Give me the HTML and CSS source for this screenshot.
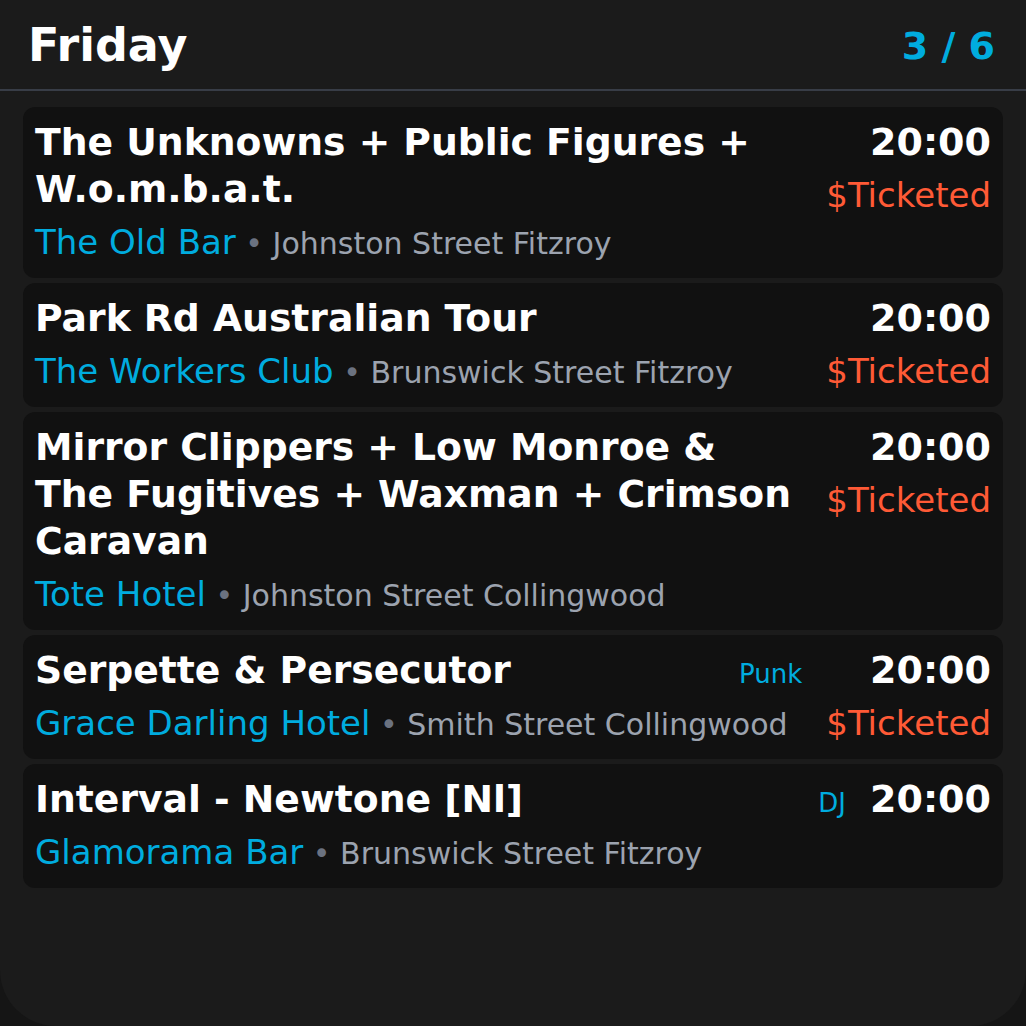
FILE: index.html
```html
<!DOCTYPE html>
<html lang="en">
<head>
<meta charset="utf-8">
<title>Friday</title>
<link rel="stylesheet" href="styles.css">
</head>
<body>
<div class="panel">
  <header class="header">
    <h1 class="day">Friday</h1>
    <div class="counter">3 / 6</div>
  </header>
  <main class="list">
    <article class="card">
      <div class="info">
        <div class="head">
          <div class="title">The Unknowns + Public Figures + W.o.m.b.a.t.</div>
        </div>
        <div class="place"><span class="venue">The Old Bar</span> <span class="dot">•</span> <span class="addr">Johnston Street Fitzroy</span></div>
      </div>
      <div class="meta">
        <div class="time">20:00</div>
        <div class="price">$Ticketed</div>
      </div>
    </article>
    <article class="card">
      <div class="info">
        <div class="head">
          <div class="title">Park Rd Australian Tour</div>
        </div>
        <div class="place"><span class="venue">The Workers Club</span> <span class="dot">•</span> <span class="addr">Brunswick Street Fitzroy</span></div>
      </div>
      <div class="meta">
        <div class="time">20:00</div>
        <div class="price">$Ticketed</div>
      </div>
    </article>
    <article class="card">
      <div class="info">
        <div class="head">
          <div class="title">Mirror Clippers + Low Monroe &amp; The Fugitives + Waxman + Crimson Caravan</div>
        </div>
        <div class="place"><span class="venue">Tote Hotel</span> <span class="dot">•</span> <span class="addr">Johnston Street Collingwood</span></div>
      </div>
      <div class="meta">
        <div class="time">20:00</div>
        <div class="price">$Ticketed</div>
      </div>
    </article>
    <article class="card">
      <div class="info">
        <div class="head">
          <div class="title">Serpette &amp; Persecutor</div>
          <div class="genre">Punk</div>
        </div>
        <div class="place"><span class="venue">Grace Darling Hotel</span> <span class="dot">•</span> <span class="addr">Smith Street Collingwood</span></div>
      </div>
      <div class="meta">
        <div class="time">20:00</div>
        <div class="price">$Ticketed</div>
      </div>
    </article>
    <article class="card">
      <div class="info">
        <div class="head">
          <div class="title">Interval - Newtone [Nl]</div>
          <div class="genre">DJ</div>
        </div>
        <div class="place"><span class="venue">Glamorama Bar</span> <span class="dot">•</span> <span class="addr">Brunswick Street Fitzroy</span></div>
      </div>
      <div class="meta">
        <div class="time">20:00</div>
      </div>
    </article>
  </main>
</div>
</body>
</html>
```

FILE: styles.css
```css
html, body {
  margin: 0;
  padding: 0;
  background: #151515;
}

body {
  font-family: "DejaVu Sans", "Liberation Sans", sans-serif;
  color: #ffffff;
}

.panel {
  height: 1026px;
  box-sizing: border-box;
  background: #1b1b1b;
  border-radius: 0 0 56px 56px;
  overflow: hidden;
}

.header {
  display: flex;
  align-items: center;
  justify-content: space-between;
  padding: 19px 31px 17px 28px;
  border-bottom: 2px solid #383d47;
}

.day {
  margin: 0;
  font-size: 46px;
  line-height: 1.16;
  font-weight: bold;
}

.counter {
  font-size: 38px;
  font-weight: bold;
  color: #00acdf;
}

.list {
  display: flex;
  flex-direction: column;
  gap: 5px;
  padding: 16px 23px 0 23px;
}

.card {
  display: flex;
  align-items: flex-start;
  gap: 24px;
  background: #111111;
  border-radius: 12px;
  padding: 12px 12px 10px 12px;
}

.info {
  flex: 1;
  min-width: 0;
}

.head {
  display: flex;
  align-items: baseline;
  gap: 24px;
}

.title {
  flex: 1;
  min-width: 0;
  font-size: 37.7px;
  line-height: 47px;
  font-weight: bold;
}

.genre {
  font-size: 26px;
  color: #00acdf;
}

.place {
  margin-top: 4px;
  font-size: 30px;
  line-height: 1.5;
  color: #9ca3af;
}

.venue {
  font-size: 34px;
  color: #00acdf;
}

.dot {
  color: #6b7280;
}

.addr {
  color: #9ca3af;
}

.meta {
  display: flex;
  flex-direction: column;
  align-items: flex-end;
}

.time {
  font-size: 38px;
  line-height: 47px;
  font-weight: bold;
}

.price {
  margin-top: 4px;
  font-size: 34px;
  line-height: 1.5;
  color: #ff5a36;
}
```
